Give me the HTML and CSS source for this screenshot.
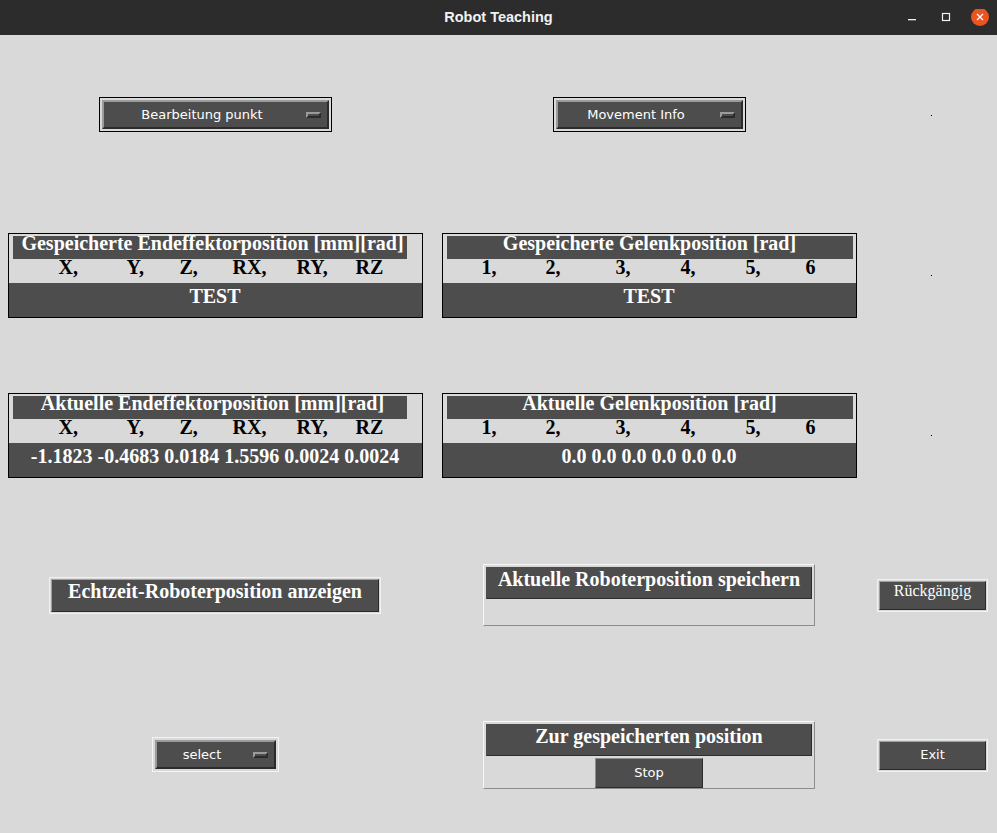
FILE: index.html
```html
<!DOCTYPE html>
<html lang="de">
<head>
<meta charset="utf-8">
<title>Robot Teaching</title>
<link rel="stylesheet" href="styles.css">
</head>
<body>
<header class="titlebar">
  <div class="title">Robot Teaching</div>
  <div class="controls">
    <svg class="ctl" width="18" height="18" viewBox="0 0 18 18"><rect x="5" y="10" width="8" height="1.3" fill="#f2f2f2"/></svg>
    <svg class="ctl" width="18" height="18" viewBox="0 0 18 18"><rect x="5.5" y="4.5" width="7" height="7" fill="none" stroke="#f2f2f2" stroke-width="1.2"/></svg>
    <svg class="ctl" width="18" height="18" viewBox="0 0 18 18"><circle cx="9" cy="8" r="9" fill="#e95420"/><path d="M6 5 L12 11 M12 5 L6 11" stroke="#ffffff" stroke-width="1.3" fill="none"/></svg>
  </div>
</header>

<main class="main">
  <!-- row 1 -->
  <div class="mb mb-dark mb-wide">
    <div class="mb-face"><span class="mb-text">Bearbeitung punkt</span><span class="ind"></span></div>
  </div>
  <div class="mb mb-dark mb-mid">
    <div class="mb-face"><span class="mb-text">Movement Info</span><span class="ind"></span></div>
  </div>
  <span class="dot"></span>

  <!-- row 2 -->
  <section class="pframe pframe-left">
    <div class="phead">Gespeicherte Endeffektorposition [mm][rad]</div>
    <div class="prow prow-left"><span>X,</span><span>Y,</span><span>Z,</span><span>RX,</span><span>RY,</span><span>RZ</span></div>
    <div class="pval">TEST</div>
  </section>
  <section class="pframe pframe-right">
    <div class="phead">Gespeicherte Gelenkposition [rad]</div>
    <div class="prow prow-right"><span>1,</span><span>2,</span><span>3,</span><span>4,</span><span>5,</span><span>6</span></div>
    <div class="pval">TEST</div>
  </section>
  <span class="dot"></span>

  <!-- row 3 -->
  <section class="pframe pframe-left">
    <div class="phead">Aktuelle Endeffektorposition [mm][rad]</div>
    <div class="prow prow-left"><span>X,</span><span>Y,</span><span>Z,</span><span>RX,</span><span>RY,</span><span>RZ</span></div>
    <div class="pval">-1.1823 -0.4683 0.0184 1.5596 0.0024 0.0024</div>
  </section>
  <section class="pframe pframe-right">
    <div class="phead">Aktuelle Gelenkposition [rad]</div>
    <div class="prow prow-right"><span>1,</span><span>2,</span><span>3,</span><span>4,</span><span>5,</span><span>6</span></div>
    <div class="pval">0.0 0.0 0.0 0.0 0.0 0.0</div>
  </section>
  <span class="dot"></span>

  <!-- row 4 -->
  <div class="btn btn-big"><div class="btn-face">Echtzeit-Roboterposition anzeigen</div></div>
  <section class="cframe">
    <div class="clabel">Aktuelle Roboterposition speichern</div>
    <div class="cspace"></div>
  </section>
  <div class="btn btn-small"><div class="btn-face btn-serif">Rückgängig</div></div>

  <!-- row 5 -->
  <div class="mb mb-light mb-small">
    <div class="mb-face"><span class="mb-text">select</span><span class="ind"></span></div>
  </div>
  <section class="cframe">
    <div class="clabel">Zur gespeicherten position</div>
    <div class="stop">Stop</div>
  </section>
  <div class="btn btn-small"><div class="btn-face btn-sans">Exit</div></div>
</main>
</body>
</html>
```

FILE: styles.css
```css
* {
  box-sizing: border-box;
}

html, body {
  margin: 0;
  padding: 0;
}

body {
  width: 997px;
  height: 833px;
  overflow: hidden;
  background: #d9d9d9;
}

/* ---------- title bar ---------- */
.titlebar {
  height: 35px;
  background: #2c2c2c;
  display: grid;
  grid-template-columns: 1fr auto 1fr;
  align-items: center;
}

.title {
  grid-column: 2;
  color: #f2f2f2;
  font: bold 14.5px "Liberation Sans", sans-serif;
  padding-bottom: 1px;
}

.controls {
  grid-column: 3;
  justify-self: end;
  display: flex;
  align-items: center;
  gap: 16px;
  padding-right: 8px;
}

.ctl {
  display: block;
}

/* ---------- main grid ---------- */
.main {
  display: grid;
  grid-template-columns: 430px 438px 129px;
  grid-template-rows: repeat(5, 160px);
  align-items: center;
  justify-items: center;
}

.dot {
  width: 1px;
  height: 1px;
  background: #000;
  margin-right: 3px;
}

/* ---------- menubuttons ---------- */
.mb {
  border: 1px solid #000;
  padding: 2px;
  background: #d9d9d9;
  margin-bottom: 1px;
}

.mb-light {
  border-color: #f4f4f4;
}

.mb-wide { width: 233px; }
.mb-mid { width: 193px; }
.mb-small { width: 127px; }

.mb-face {
  display: flex;
  align-items: center;
  height: 29px;
  border: 2px solid;
  border-color: #9b9b9b #2b2b2b #2b2b2b #9b9b9b;
  background: #4d4d4d;
  color: #ffffff;
  font: 13px "DejaVu Sans", sans-serif;
  white-space: nowrap;
}

.mb-text {
  flex: 1;
  text-align: center;
  padding-bottom: 1px;
}

.ind {
  width: 15px;
  height: 6px;
  border: 2px solid;
  border-color: #9b9b9b #2b2b2b #2b2b2b #9b9b9b;
  background: #4d4d4d;
  margin: 0 6px 0 5px;
}

/* ---------- position frames ---------- */
.pframe {
  width: 415px;
  border: 1px solid #000;
  padding-top: 2px;
}

.phead {
  height: 23px;
  margin: 0 3px 0 4px;
  background: #4d4d4d;
  color: #ffffff;
  font: bold 20px/15px "Liberation Serif", serif;
  text-align: center;
  white-space: nowrap;
}

.pframe-left .phead {
  margin-right: 15px;
  padding-left: 6px;
}

.prow {
  display: grid;
  height: 24px;
  color: #000;
  font: bold 20px/17px "Liberation Serif", serif;
  white-space: nowrap;
}

.prow-left {
  padding-left: 50px;
  grid-template-columns: 68px 53px 53px 64px 59px auto;
}

.prow-right {
  padding-left: 39px;
  grid-template-columns: 64px 70px 65px 65px 60px auto;
}

.pval {
  height: 34px;
  padding-top: 2px;
  background: #4d4d4d;
  color: #ffffff;
  font: bold 20px/23px "Liberation Serif", serif;
  text-align: center;
  white-space: nowrap;
}

/* ---------- buttons ---------- */
.btn {
  border: 1px solid #f2f2f2;
  padding: 1px;
}

.btn-face {
  border: 1px solid;
  border-color: #a0a0a0 #2b2b2b #2b2b2b #a0a0a0;
  background: #4d4d4d;
  color: #ffffff;
  text-align: center;
  white-space: nowrap;
}

.btn-big {
  width: 332px;
}

.btn-big .btn-face {
  height: 33px;
  font: bold 20px/20px "Liberation Serif", serif;
  padding-top: 1px;
}

.btn-small {
  width: 111px;
}

.btn-small .btn-face {
  height: 29px;
}

.btn-serif {
  font: 16px "Liberation Serif", serif;
  padding-top: 0;
}

.btn-sans {
  display: flex;
  align-items: center;
  justify-content: center;
  font: 13px "DejaVu Sans", sans-serif;
  padding-bottom: 1px;
}

/* ---------- command frames ---------- */
.cframe {
  width: 332px;
  border: 1px solid;
  border-color: #f8f8f8 #8c8c8c #8c8c8c #f8f8f8;
  padding: 2px 2px 0;
}

.clabel {
  height: 32px;
  border: 1px solid;
  border-color: #4d4d4d #2c2c2c #2c2c2c #4d4d4d;
  background: #4d4d4d;
  color: #ffffff;
  font: bold 20px/20px "Liberation Serif", serif;
  text-align: center;
  padding-top: 1px;
  white-space: nowrap;
}

.cspace {
  height: 26px;
}

.stop {
  width: 108px;
  height: 30px;
  margin: 2px auto 0;
  border: 1px solid;
  border-color: #8c8c8c #2c2c2c #2c2c2c #8c8c8c;
  background: #4d4d4d;
  color: #ffffff;
  font: 13px "DejaVu Sans", sans-serif;
  display: flex;
  align-items: center;
  justify-content: center;
  padding-bottom: 1px;
}
```
